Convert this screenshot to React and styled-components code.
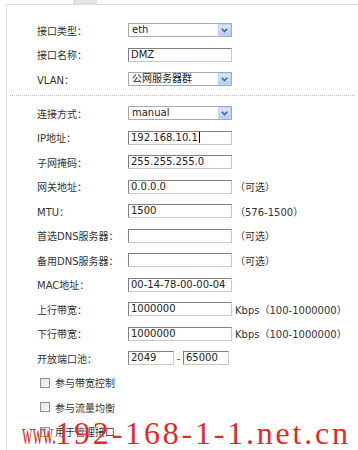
import React from "react";
import styled, { createGlobalStyle } from "styled-components";

const GlobalStyle = createGlobalStyle`
  html, body {
    margin: 0;
    padding: 0;
    background: #fff;
  }
  body {
    font-family: "DejaVu Sans", "Noto Sans CJK SC", sans-serif;
    font-size: 10px;
    color: #333;
  }
`;

const Page = styled.div`
  position: relative;
  width: 358px;
  height: 450px;
  overflow: hidden;
`;

const TabBar = styled.div`
  height: 4px;
  .stub {
    margin-left: 73px;
    width: 24px;
    height: 4px;
    background: #e2e2e2;
  }
`;

const Panel = styled.div`
  margin-left: 6px;
  border-top: 1px solid #dcdcdc;
  border-left: 1px solid #dcdcdc;
  padding: 12.75px 0 0 30px;
  height: 440px;
`;

const Row = styled.div`
  display: flex;
  align-items: center;
  height: 24.5px;
`;

const Label = styled.div`
  width: 91px;
  flex: none;
  color: #333;
  white-space: nowrap;
`;

const Divider = styled.div`
  margin: 3.75px 3px 5px -27px;
  border-top: 1px dotted #bdbdbd;
`;

const Field = styled.div`
  position: relative;
  box-sizing: border-box;
  width: ${(p) => p.$width || 104}px;
  height: 14px;
  padding-left: 2px;
  border: 1px solid;
  border-color: #808080 #c8c8c8 #c8c8c8 #808080;
  background: #fff;
  color: #222;
  line-height: 12px;
  white-space: nowrap;
`;

const Caret = styled.span`
  display: inline-block;
  width: 1px;
  height: 11px;
  margin-left: 1px;
  vertical-align: -2px;
  background: #000;
`;

const SelectBox = styled.div`
  position: relative;
  box-sizing: border-box;
  width: 104px;
  height: 14px;
  padding-left: 3px;
  border: 1px solid #a7abb0;
  background: #fff;
  color: #222;
  line-height: 12px;
  white-space: nowrap;
  .arrow {
    position: absolute;
    top: 0;
    right: 0;
    width: 13px;
    height: 12px;
    box-sizing: border-box;
    border: 1px solid #c3d2f3;
    background: linear-gradient(#dde7fc, #b9ccf5);
    display: flex;
    align-items: center;
    justify-content: center;
  }
`;

const Hint = styled.span`
  margin-left: 3px;
  color: #333;
  white-space: nowrap;
`;

const Dash = styled.span`
  width: 9px;
  text-align: center;
  color: #555;
`;

const CheckRow = styled.div`
  display: flex;
  align-items: center;
  height: 24.5px;
  padding-left: 3px;
  gap: 5px;
  color: #333;
`;

const CheckBox = styled.span`
  box-sizing: border-box;
  width: 10px;
  height: 10px;
  border: 1px solid #8d9196;
  background: linear-gradient(135deg, #e0e0e0, #fdfdfd);
`;

const Watermark = styled.div`
  position: absolute;
  left: 22px;
  top: 417px;
  display: flex;
  white-space: nowrap;
  font-family: "Liberation Serif", serif;
  font-size: 32px;
  line-height: 32px;
  color: #e22a28;
  .prefix {
    display: inline-block;
    transform: scaleX(0.45);
    transform-origin: left center;
    margin-right: -42px;
  }
  .domain {
    letter-spacing: 2.8px;
  }
`;

function Select({ value }) {
  return (
    <SelectBox>
      {value}
      <span className="arrow">
        <svg width="7" height="5" viewBox="0 0 7 5">
          <polyline points="0.8,0.8 3.5,3.6 6.2,0.8" fill="none" stroke="#4a5f8a" strokeWidth="1.6" />
        </svg>
      </span>
    </SelectBox>
  );
}

const top = [
  { label: "接口类型：", select: "eth" },
  { label: "接口名称：", value: "DMZ" },
  { label: "VLAN：", select: "公网服务器群" },
];

const rows = [
  { label: "连接方式：", select: "manual" },
  { label: "IP地址：", value: "192.168.10.1", caret: true },
  { label: "子网掩码：", value: "255.255.255.0" },
  { label: "网关地址：", value: "0.0.0.0", hint: "（可选）" },
  { label: "MTU：", value: "1500", hint: "（576-1500）" },
  { label: "首选DNS服务器：", value: "", hint: "（可选）" },
  { label: "备用DNS服务器：", value: "", hint: "（可选）" },
  { label: "MAC地址：", value: "00-14-78-00-00-04" },
  { label: "上行带宽：", value: "1000000", hint: "Kbps（100-1000000）" },
  { label: "下行带宽：", value: "1000000", hint: "Kbps（100-1000000）" },
];

const checks = ["参与带宽控制", "参与流量均衡", "用于管理接口"];

function FormRow({ row }) {
  return (
    <Row>
      <Label>{row.label}</Label>
      {row.select ? (
        <Select value={row.select} />
      ) : (
        <Field>
          {row.value}
          {row.caret && <Caret />}
        </Field>
      )}
      {row.hint && <Hint>{row.hint}</Hint>}
    </Row>
  );
}

export default function App() {
  return (
    <Page>
      <GlobalStyle />
      <TabBar>
        <div className="stub" />
      </TabBar>
      <Panel>
        {top.map((r) => (
          <FormRow key={r.label} row={r} />
        ))}
        <Divider />
        {rows.map((r) => (
          <FormRow key={r.label} row={r} />
        ))}
        <Row>
          <Label>开放端口池：</Label>
          <Field $width={46}>2049</Field>
          <Dash>-</Dash>
          <Field $width={46}>65000</Field>
        </Row>
        {checks.map((c) => (
          <CheckRow key={c}>
            <CheckBox />
            {c}
          </CheckRow>
        ))}
      </Panel>
      <Watermark>
        <span className="prefix">www.</span>
        <span className="domain">192-168-1-1.net.cn</span>
      </Watermark>
    </Page>
  );
}
